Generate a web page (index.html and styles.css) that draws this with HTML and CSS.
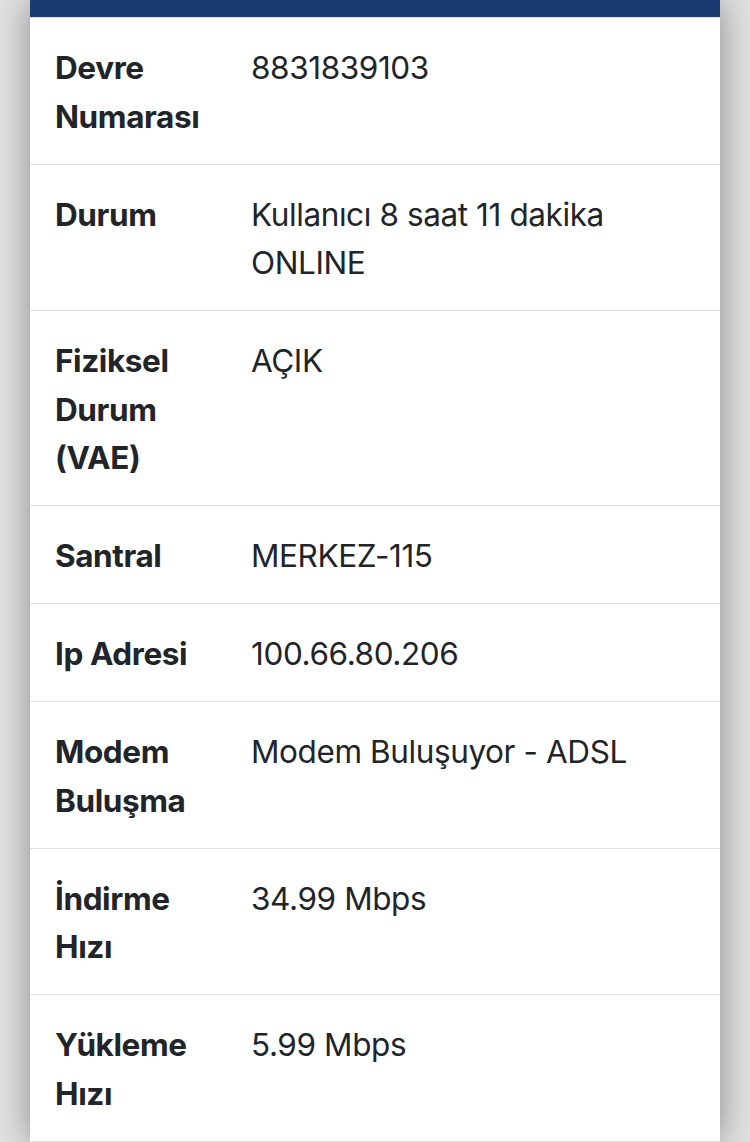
FILE: index.html
```html
<!DOCTYPE html>
<html lang="tr">
<head>
<meta charset="utf-8">
<title>Devre Bilgileri</title>
<link rel="stylesheet" href="styles.css">
</head>
<body>
<div class="page">
  <div class="card">
    <div class="card-head"></div>
    <div class="rows">
      <div class="row"><div class="label">Devre Numarası</div><div class="value">8831839103</div></div>
      <div class="row"><div class="label">Durum</div><div class="value">Kullanıcı 8 saat 11 dakika ONLINE</div></div>
      <div class="row"><div class="label">Fiziksel Durum (VAE)</div><div class="value">AÇIK</div></div>
      <div class="row"><div class="label">Santral</div><div class="value">MERKEZ-115</div></div>
      <div class="row"><div class="label">Ip Adresi</div><div class="value">100.66.80.206</div></div>
      <div class="row"><div class="label">Modem Buluşma</div><div class="value">Modem Buluşuyor - ADSL</div></div>
      <div class="row"><div class="label">İndirme Hızı</div><div class="value">34.99 Mbps</div></div>
      <div class="row"><div class="label">Yükleme Hızı</div><div class="value">5.99 Mbps</div></div>
    </div>
  </div>
</div>
</body>
</html>
```
FILE: styles.css
```css
html, body {
  margin: 0;
  padding: 0;
}
body {
  background: #e2e2e2;
  font-family: Inter, "Noto Sans", sans-serif;
  color: #212529;
  height: 1142px;
  overflow: hidden;
}
.page {
  padding: 0 30px;
}
.card {
  background: #fff;
  box-shadow: 0 0 34px rgba(0, 0, 0, 0.4);
  min-height: 1142px;
}
.card-head {
  height: 17px;
  background: #193a73;
  border-bottom: 1px solid #dee2e6;
}
.row {
  display: grid;
  grid-template-columns: 221px 1fr;
  border-bottom: 1px solid #dee2e6;
}
.label, .value {
  padding: 26px 24px 22.5px 25px;
  font-size: 31.5px;
  line-height: 48.5px;
  letter-spacing: -0.4px;
}
.label {
  font-weight: 700;
}
.value {
  padding-left: 0;
  font-weight: 400;
}
```
